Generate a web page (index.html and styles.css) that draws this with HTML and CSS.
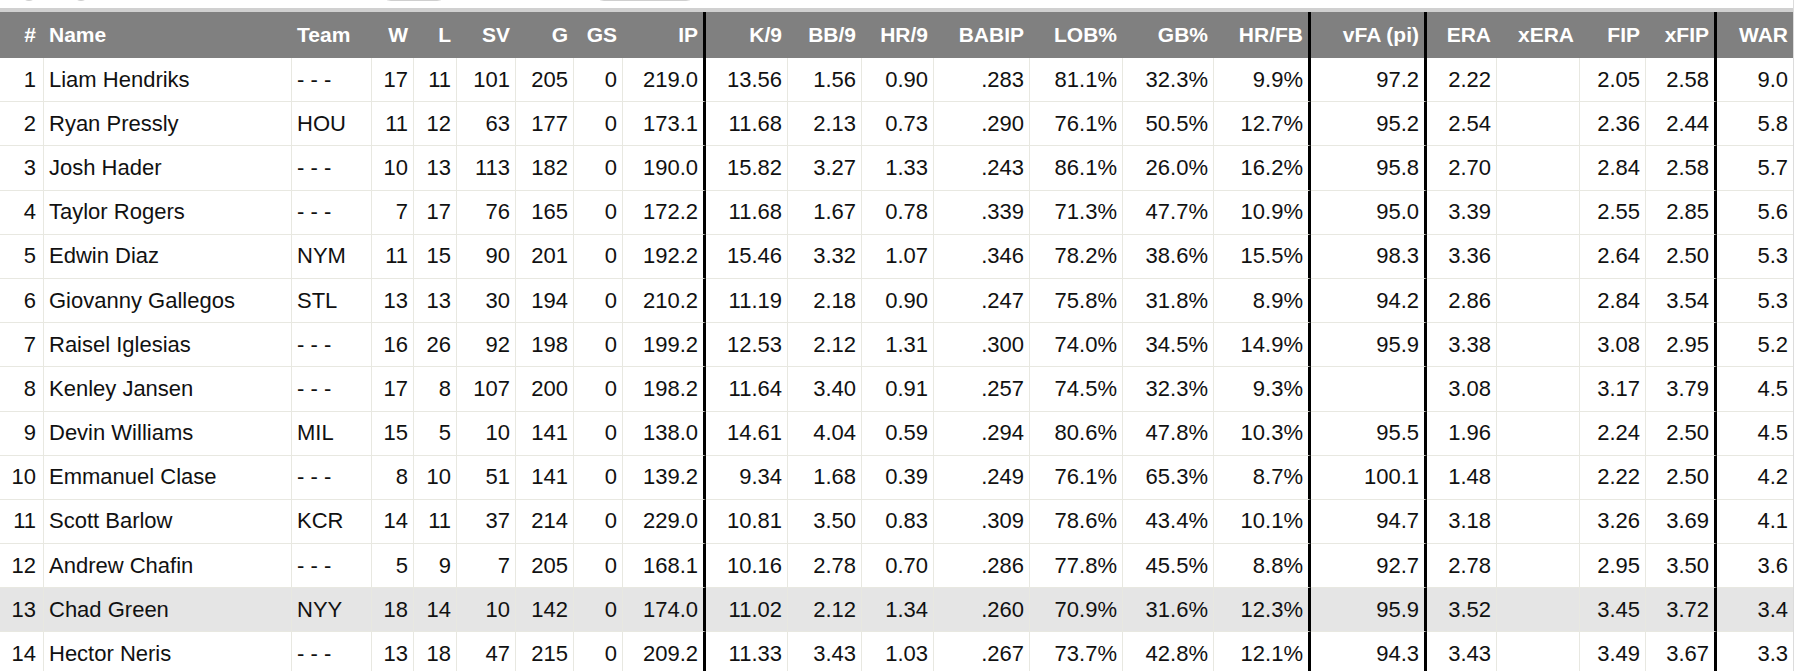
FILE: index.html
```html
<!DOCTYPE html>
<html lang="en">
<head>
<meta charset="utf-8">
<title>Relievers</title>
<link rel="stylesheet" href="styles.css">
</head>
<body>
<div class="frame">
  <div class="toolbar">
    <span class="dot dot-a"></span>
    <span class="dot dot-b"></span>
    <span class="pill pill-a"></span>
    <span class="pill pill-b"></span>
  </div>
  <table class="stats">
    <colgroup>
      <col class="w-num"><col class="w-name"><col class="w-team"><col class="w-w"><col class="w-l"><col class="w-sv"><col class="w-g"><col class="w-gs"><col class="w-ip">
      <col class="w-k9"><col class="w-bb9"><col class="w-hr9"><col class="w-babip"><col class="w-lob"><col class="w-gb"><col class="w-hrfb">
      <col class="w-vfa"><col class="w-era"><col class="w-xera"><col class="w-fip"><col class="w-xfip"><col class="w-war">
    </colgroup>
    <thead>
      <tr>
        <th class="r">#</th><th class="l">Name</th><th class="l">Team</th><th>W</th><th>L</th><th>SV</th><th>G</th><th>GS</th><th class="thick">IP</th>
        <th>K/9</th><th>BB/9</th><th>HR/9</th><th>BABIP</th><th>LOB%</th><th>GB%</th><th class="thick">HR/FB</th>
        <th class="thick">vFA (pi)</th><th>ERA</th><th>xERA</th><th>FIP</th><th class="thick">xFIP</th><th class="last">WAR</th>
      </tr>
    </thead>
    <tbody>
      <tr><td>1</td><td class="l">Liam Hendriks</td><td class="l">- - -</td><td>17</td><td>11</td><td>101</td><td>205</td><td>0</td><td class="thick">219.0</td><td>13.56</td><td>1.56</td><td>0.90</td><td>.283</td><td>81.1%</td><td>32.3%</td><td class="thick">9.9%</td><td class="thick">97.2</td><td>2.22</td><td></td><td>2.05</td><td class="thick">2.58</td><td class="last">9.0</td></tr>
      <tr><td>2</td><td class="l">Ryan Pressly</td><td class="l">HOU</td><td>11</td><td>12</td><td>63</td><td>177</td><td>0</td><td class="thick">173.1</td><td>11.68</td><td>2.13</td><td>0.73</td><td>.290</td><td>76.1%</td><td>50.5%</td><td class="thick">12.7%</td><td class="thick">95.2</td><td>2.54</td><td></td><td>2.36</td><td class="thick">2.44</td><td class="last">5.8</td></tr>
      <tr><td>3</td><td class="l">Josh Hader</td><td class="l">- - -</td><td>10</td><td>13</td><td>113</td><td>182</td><td>0</td><td class="thick">190.0</td><td>15.82</td><td>3.27</td><td>1.33</td><td>.243</td><td>86.1%</td><td>26.0%</td><td class="thick">16.2%</td><td class="thick">95.8</td><td>2.70</td><td></td><td>2.84</td><td class="thick">2.58</td><td class="last">5.7</td></tr>
      <tr><td>4</td><td class="l">Taylor Rogers</td><td class="l">- - -</td><td>7</td><td>17</td><td>76</td><td>165</td><td>0</td><td class="thick">172.2</td><td>11.68</td><td>1.67</td><td>0.78</td><td>.339</td><td>71.3%</td><td>47.7%</td><td class="thick">10.9%</td><td class="thick">95.0</td><td>3.39</td><td></td><td>2.55</td><td class="thick">2.85</td><td class="last">5.6</td></tr>
      <tr><td>5</td><td class="l">Edwin Diaz</td><td class="l">NYM</td><td>11</td><td>15</td><td>90</td><td>201</td><td>0</td><td class="thick">192.2</td><td>15.46</td><td>3.32</td><td>1.07</td><td>.346</td><td>78.2%</td><td>38.6%</td><td class="thick">15.5%</td><td class="thick">98.3</td><td>3.36</td><td></td><td>2.64</td><td class="thick">2.50</td><td class="last">5.3</td></tr>
      <tr><td>6</td><td class="l">Giovanny Gallegos</td><td class="l">STL</td><td>13</td><td>13</td><td>30</td><td>194</td><td>0</td><td class="thick">210.2</td><td>11.19</td><td>2.18</td><td>0.90</td><td>.247</td><td>75.8%</td><td>31.8%</td><td class="thick">8.9%</td><td class="thick">94.2</td><td>2.86</td><td></td><td>2.84</td><td class="thick">3.54</td><td class="last">5.3</td></tr>
      <tr><td>7</td><td class="l">Raisel Iglesias</td><td class="l">- - -</td><td>16</td><td>26</td><td>92</td><td>198</td><td>0</td><td class="thick">199.2</td><td>12.53</td><td>2.12</td><td>1.31</td><td>.300</td><td>74.0%</td><td>34.5%</td><td class="thick">14.9%</td><td class="thick">95.9</td><td>3.38</td><td></td><td>3.08</td><td class="thick">2.95</td><td class="last">5.2</td></tr>
      <tr><td>8</td><td class="l">Kenley Jansen</td><td class="l">- - -</td><td>17</td><td>8</td><td>107</td><td>200</td><td>0</td><td class="thick">198.2</td><td>11.64</td><td>3.40</td><td>0.91</td><td>.257</td><td>74.5%</td><td>32.3%</td><td class="thick">9.3%</td><td class="thick"></td><td>3.08</td><td></td><td>3.17</td><td class="thick">3.79</td><td class="last">4.5</td></tr>
      <tr><td>9</td><td class="l">Devin Williams</td><td class="l">MIL</td><td>15</td><td>5</td><td>10</td><td>141</td><td>0</td><td class="thick">138.0</td><td>14.61</td><td>4.04</td><td>0.59</td><td>.294</td><td>80.6%</td><td>47.8%</td><td class="thick">10.3%</td><td class="thick">95.5</td><td>1.96</td><td></td><td>2.24</td><td class="thick">2.50</td><td class="last">4.5</td></tr>
      <tr><td>10</td><td class="l">Emmanuel Clase</td><td class="l">- - -</td><td>8</td><td>10</td><td>51</td><td>141</td><td>0</td><td class="thick">139.2</td><td>9.34</td><td>1.68</td><td>0.39</td><td>.249</td><td>76.1%</td><td>65.3%</td><td class="thick">8.7%</td><td class="thick">100.1</td><td>1.48</td><td></td><td>2.22</td><td class="thick">2.50</td><td class="last">4.2</td></tr>
      <tr><td>11</td><td class="l">Scott Barlow</td><td class="l">KCR</td><td>14</td><td>11</td><td>37</td><td>214</td><td>0</td><td class="thick">229.0</td><td>10.81</td><td>3.50</td><td>0.83</td><td>.309</td><td>78.6%</td><td>43.4%</td><td class="thick">10.1%</td><td class="thick">94.7</td><td>3.18</td><td></td><td>3.26</td><td class="thick">3.69</td><td class="last">4.1</td></tr>
      <tr><td>12</td><td class="l">Andrew Chafin</td><td class="l">- - -</td><td>5</td><td>9</td><td>7</td><td>205</td><td>0</td><td class="thick">168.1</td><td>10.16</td><td>2.78</td><td>0.70</td><td>.286</td><td>77.8%</td><td>45.5%</td><td class="thick">8.8%</td><td class="thick">92.7</td><td>2.78</td><td></td><td>2.95</td><td class="thick">3.50</td><td class="last">3.6</td></tr>
      <tr class="hl"><td>13</td><td class="l">Chad Green</td><td class="l">NYY</td><td>18</td><td>14</td><td>10</td><td>142</td><td>0</td><td class="thick">174.0</td><td>11.02</td><td>2.12</td><td>1.34</td><td>.260</td><td>70.9%</td><td>31.6%</td><td class="thick">12.3%</td><td class="thick">95.9</td><td>3.52</td><td></td><td>3.45</td><td class="thick">3.72</td><td class="last">3.4</td></tr>
      <tr><td>14</td><td class="l">Hector Neris</td><td class="l">- - -</td><td>13</td><td>18</td><td>47</td><td>215</td><td>0</td><td class="thick">209.2</td><td>11.33</td><td>3.43</td><td>1.03</td><td>.267</td><td>73.7%</td><td>42.8%</td><td class="thick">12.1%</td><td class="thick">94.3</td><td>3.43</td><td></td><td>3.49</td><td class="thick">3.67</td><td class="last">3.3</td></tr>
    </tbody>
  </table>
</div>
</body>
</html>
```

FILE: styles.css
```css
html, body {
  margin: 0;
  padding: 0;
  background: #ffffff;
  overflow: hidden;
}

body {
  font-family: "Liberation Sans", Arial, Helvetica, sans-serif;
  color: #111111;
}

.frame {
  width: 1793px;
  border-right: 1px solid #dcdcdc;
  min-height: 671px;
}

.toolbar {
  height: 8px;
  overflow: hidden;
  display: flex;
  align-items: flex-start;
}

.dot,
.pill {
  display: block;
  flex: none;
  border: 1px solid #cfcfcf;
  height: 22px;
  margin-top: -21px;
  box-sizing: border-box;
  background: #fff;
}

.dot {
  width: 18px;
  border-radius: 50%;
}

.dot-a { margin-left: 20px; }
.dot-b { margin-left: 34px; }

.pill {
  border-radius: 11px;
}

.pill-a { width: 68px; margin-left: 290px; }
.pill-b { width: 104px; margin-left: 145px; }

.stats {
  width: 1793px;
  table-layout: fixed;
  border-collapse: separate;
  border-spacing: 0;
  border-top: 4px solid #d0d0d0;
}

.w-num { width: 44px; }
.w-name { width: 248px; }
.w-team { width: 80px; }
.w-w { width: 42px; }
.w-l { width: 43px; }
.w-sv { width: 59px; }
.w-g { width: 58px; }
.w-gs { width: 49px; }
.w-ip { width: 83px; }
.w-k9 { width: 82px; }
.w-bb9 { width: 74px; }
.w-hr9 { width: 72px; }
.w-babip { width: 96px; }
.w-lob { width: 93px; }
.w-gb { width: 91px; }
.w-hrfb { width: 97px; }
.w-vfa { width: 116px; }
.w-era { width: 70px; }
.w-xera { width: 83px; }
.w-fip { width: 66px; }
.w-xfip { width: 71px; }
.w-war { width: 76px; }

.stats th {
  background: #808080;
  color: #ffffff;
  font-size: 21px;
  font-weight: bold;
  height: 46px;
  padding: 0 5px 0 4px;
  text-align: right;
  vertical-align: middle;
  white-space: nowrap;
  border-right: 1px solid #808080;
  box-sizing: border-box;
}

.stats td {
  font-size: 22px;
  height: 44.2px;
  padding: 0 5px 0 4px;
  text-align: right;
  vertical-align: middle;
  white-space: nowrap;
  border-right: 1px solid #e8e8e1;
  border-bottom: 1px solid #e8e8e1;
  box-sizing: border-box;
}

.stats td:first-child,
.stats th:first-child {
  padding-right: 7px;
}

.stats .l {
  text-align: left;
  padding-left: 5px;
}

.stats .thick {
  border-right: 3px solid #000000;
}

.stats .last {
  border-right: none;
}

.stats tr.hl td {
  background: #e5e5e5;
}
```
